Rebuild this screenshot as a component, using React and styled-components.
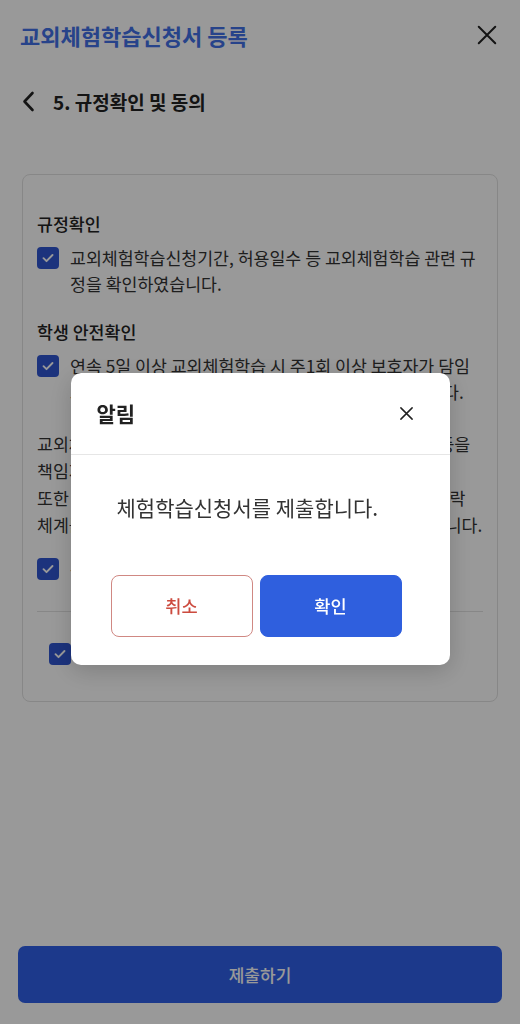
import React from "react";
import styled, { createGlobalStyle } from "styled-components";

const GlobalStyle = createGlobalStyle`
  * { box-sizing: border-box; }
  html, body { margin: 0; padding: 0; background: #ffffff; }
  body {
    font-family: "Noto Sans CJK KR", "Noto Sans", sans-serif;
    color: #222;
  }
`;

const Page = styled.div`
  min-height: 100vh;
  display: flex;
  flex-direction: column;
  background: #fff;
`;

const Header = styled.header`
  height: 70px;
  display: flex;
  align-items: center;
  justify-content: space-between;
  padding: 0 22px 0 20px;
`;

const HeaderTitle = styled.h1`
  margin: 0;
  font-size: 22px;
  font-weight: 700;
  color: #4270e6;
`;

const IconButton = styled.button`
  border: 0;
  background: transparent;
  padding: 0;
  display: flex;
  align-items: center;
  justify-content: center;
  color: #222;
  cursor: pointer;
`;

const SubHeader = styled.div`
  height: 62px;
  display: flex;
  align-items: center;
  gap: 18px;
  padding: 0 22px;
`;

const StepTitle = styled.h2`
  margin: 0;
  font-size: 19px;
  font-weight: 700;
  color: #222;
`;

const Card = styled.section`
  margin: 42px 22px 0;
  border: 1px solid #e2e2e2;
  border-radius: 8px;
  padding: 37px 14px 34px;
  display: flex;
  flex-direction: column;
`;

const SectionTitle = styled.div`
  font-size: 17.3px;
  font-weight: 500;
  line-height: 24px;
  color: #222;
  margin-top: ${(p) => p.$mt || 0}px;
`;

const CheckRow = styled.label`
  display: flex;
  align-items: flex-start;
  gap: 11px;
  margin-top: ${(p) => p.$mt || 0}px;
  padding-left: ${(p) => p.$indent || 0}px;
`;

const CheckBox = styled.span`
  flex: 0 0 22px;
  width: 22px;
  height: 22px;
  margin-top: 2px;
  border-radius: 4px;
  background: #2f55d0;
  display: flex;
  align-items: center;
  justify-content: center;
`;

const CheckText = styled.span`
  flex: 1;
  font-size: 17.3px;
  line-height: 26px;
  color: #333;
  word-break: break-all;
`;

const Paragraph = styled.p`
  margin: 25px 0 0;
  font-size: 17.3px;
  line-height: 27px;
  color: #333;
`;

const ParagraphLine = styled.span`
  display: block;
  white-space: nowrap;
`;

const Divider = styled.hr`
  margin: 29px 0 0;
  border: 0;
  border-top: 1px solid #e2e2e2;
`;

const Spacer = styled.div`
  flex: 1;
`;

const Footer = styled.div`
  padding: 0 18px 21px;
`;

const SubmitButton = styled.button`
  width: 100%;
  height: 57px;
  border: 0;
  border-radius: 7px;
  background: #3060e8;
  color: #fff;
  font-family: inherit;
  font-size: 17px;
  font-weight: 500;
`;

const Overlay = styled.div`
  position: fixed;
  inset: 0;
  background: rgba(0, 0, 0, 0.4);
  display: flex;
  align-items: center;
  justify-content: center;
  padding-top: 13px;
`;

const Modal = styled.div`
  width: 379px;
  background: #fff;
  border-radius: 10px;
  box-shadow: 0 6px 24px rgba(0, 0, 0, 0.18);
  overflow: hidden;
`;

const ModalHeader = styled.div`
  height: 82px;
  display: flex;
  align-items: center;
  justify-content: space-between;
  padding: 0 36px 0 26px;
  border-bottom: 1px solid #e6e6e6;
`;

const ModalTitle = styled.div`
  font-size: 21px;
  font-weight: 700;
  color: #222;
`;

const ModalBody = styled.div`
  padding: 38px 48px 28px 40px;
`;

const Message = styled.p`
  margin: 0 0 54px 6px;
  font-size: 21px;
  line-height: 28px;
  color: #333;
  white-space: nowrap;
`;

const ButtonRow = styled.div`
  display: flex;
  gap: 7px;
`;

const DialogButton = styled.button`
  width: 142px;
  height: 62px;
  border-radius: 8px;
  font-family: inherit;
  font-size: 17.6px;
  font-weight: 500;
  border: 1px solid ${(p) => (p.$primary ? "#2f5fde" : "#d08883")};
  background: ${(p) => (p.$primary ? "#2f5fde" : "#fff")};
  color: ${(p) => (p.$primary ? "#fff" : "#cc4b3f")};
`;

const Check = () => (
  <CheckBox>
    <svg width="14" height="14" viewBox="0 0 14 14" fill="none">
      <path d="M2.5 7.2l3 3 6-6.2" stroke="#fff" strokeWidth="1.9" strokeLinecap="round" strokeLinejoin="round" />
    </svg>
  </CheckBox>
);

const CloseIcon = ({ size, stroke }) => (
  <svg width={size} height={size} viewBox="0 0 24 24" fill="none">
    <path d="M3 3l18 18M21 3L3 21" stroke="currentColor" strokeWidth={stroke} strokeLinecap="round" />
  </svg>
);

export default function App() {
  return (
    <>
      <GlobalStyle />
      <Page>
        <Header>
          <HeaderTitle>교외체험학습신청서 등록</HeaderTitle>
          <IconButton aria-label="닫기">
            <CloseIcon size={22} stroke={2.2} />
          </IconButton>
        </Header>
        <SubHeader>
          <IconButton aria-label="뒤로">
            <svg width="13" height="21" viewBox="0 0 13 21" fill="none">
              <path d="M10.5 2L2.5 10.5l8 8.5" stroke="#222" strokeWidth="2.6" strokeLinecap="round" strokeLinejoin="round" />
            </svg>
          </IconButton>
          <StepTitle>5. 규정확인 및 동의</StepTitle>
        </SubHeader>

        <Card>
          <SectionTitle>규정확인</SectionTitle>
          <CheckRow $mt={9}>
            <Check />
            <CheckText>교외체험학습신청기간, 허용일수 등 교외체험학습 관련 규정을 확인하였습니다.</CheckText>
          </CheckRow>

          <SectionTitle $mt={23}>학생 안전확인</SectionTitle>
          <CheckRow $mt={9}>
            <Check />
            <CheckText>연속 5일 이상 교외체험학습 시 주1회 이상 보호자가 담임교사와 연락하여 학생의 안전 여부를 확인하여야 합니다.</CheckText>
          </CheckRow>

          <Paragraph>
            <ParagraphLine>교외체험학습 기간 중 학생의 안전 및 건강관리, 생활지도 등을</ParagraphLine>
            <ParagraphLine>책임지고 지도하겠습니다.</ParagraphLine>
            <ParagraphLine>또한 교외체험학습 중 사고발생 시 학교와 보호자 간 비상연락</ParagraphLine>
            <ParagraphLine>체계를 유지하고 학생의 안전을 위하여 협조할 것을 확인합니다.</ParagraphLine>
          </Paragraph>

          <CheckRow $mt={18}>
            <Check />
            <CheckText>위 내용을 확인하였습니다.</CheckText>
          </CheckRow>

          <Divider />

          <CheckRow $mt={29} $indent={12}>
            <Check />
            <CheckText>위 모든 내용에 동의합니다.</CheckText>
          </CheckRow>
        </Card>

        <Spacer />
        <Footer>
          <SubmitButton>제출하기</SubmitButton>
        </Footer>

        <Overlay>
          <Modal role="dialog">
            <ModalHeader>
              <ModalTitle>알림</ModalTitle>
              <IconButton aria-label="닫기">
                <CloseIcon size={15} stroke={2.4} />
              </IconButton>
            </ModalHeader>
            <ModalBody>
              <Message>체험학습신청서를 제출합니다.</Message>
              <ButtonRow>
                <DialogButton>취소</DialogButton>
                <DialogButton $primary>확인</DialogButton>
              </ButtonRow>
            </ModalBody>
          </Modal>
        </Overlay>
      </Page>
    </>
  );
}
